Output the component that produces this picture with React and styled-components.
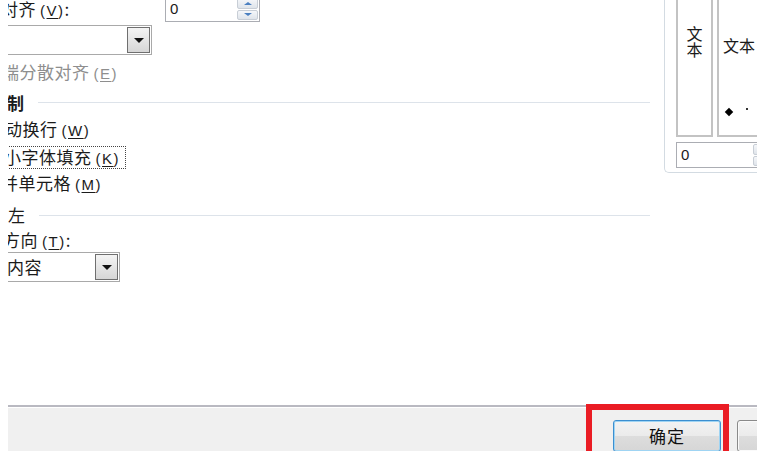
import React from 'react';
import styled, { createGlobalStyle } from 'styled-components';

const Global = createGlobalStyle`
  html, body { margin: 0; padding: 0; background: #fff; overflow: hidden; }
  body { font-family: "Noto Sans CJK SC", "Microsoft YaHei", sans-serif; color: #1b1b1b; }
`;

const Page = styled.div`
  position: relative;
  width: 757px;
  height: 451px;
  display: flex;
  flex-direction: column;
  overflow: hidden;
  background: #fff;
`;

const Main = styled.div`
  height: 405px;
  display: flex;
  flex-shrink: 0;
`;

const LeftPane = styled.div`
  width: 642px;
  margin-left: 8px;
  overflow: hidden;
  display: flex;
  flex-direction: column;
  font-size: 17px;
  letter-spacing: 0.5px;
`;

const Line = styled.div`
  height: 20px;
  line-height: 20px;
  margin-top: ${p => p.$mt || 0}px;
  margin-left: ${p => -(p.$cut || 0)}px;
  white-space: nowrap;
  color: ${p => (p.$disabled ? '#8e8e8e' : '#1b1b1b')};
`;

const Key = styled.span`
  font-family: "Liberation Sans", Arial, sans-serif;
  font-size: 15px;
  letter-spacing: 1.5px;
  margin-left: 4px;
  u { text-decoration: underline; text-underline-offset: 2px; }
`;

const Focus = styled.span`
  display: inline-block;
  border: 1px dotted #444;
  line-height: 19px;
  padding-right: 5px;
`;

const TopRow = styled.div`
  display: grid;
  grid-template-columns: 157px auto;
  align-items: center;
  height: 26px;
  margin-top: -4px;
`;

const Spin = styled.div`
  display: flex;
  width: ${p => p.$w}px;
  height: ${p => p.$h}px;
  border: 1px solid #abadb3;
  box-sizing: border-box;
  background: #fff;
`;

const SpinValue = styled.div`
  flex: 1;
  padding-left: 4px;
  font-size: 15px;
  line-height: ${p => p.$lh}px;
  font-family: "Liberation Sans", Arial, sans-serif;
  letter-spacing: 0;
`;

const SpinBtns = styled.div`
  width: 21px;
  margin: 1px;
  display: flex;
  flex-direction: column;
  gap: 1px;
`;

const SpinHalf = styled.div`
  flex: 1;
  display: flex;
  align-items: center;
  justify-content: center;
  background: linear-gradient(#f5f7fa, #dfe4ea);
  border: 1px solid #c8ced6;
  border-radius: 2px;
  &::after {
    content: '';
    border-left: 4px solid transparent;
    border-right: 4px solid transparent;
    ${p => (p.$up ? 'border-bottom: 3px solid #4a7fc0;' : 'border-top: 3px solid #4a7fc0;')}
  }
`;

const Combo = styled.div`
  display: flex;
  align-items: center;
  width: ${p => p.$w}px;
  height: 30px;
  box-sizing: border-box;
  margin-left: -10px;
  margin-top: ${p => p.$mt || 0}px;
  border: 1px solid #a9a9a9;
  background: #fff;
`;

const ComboText = styled.div`
  flex: 1;
  padding-left: 8px;
  white-space: nowrap;
  line-height: 28px;
`;

const ComboBtn = styled.div`
  width: 23px;
  height: 26px;
  margin-right: 1px;
  box-sizing: border-box;
  border: 1px solid #6f6f6f;
  background: linear-gradient(#f4f4f4, #d6d6d6);
  display: flex;
  align-items: center;
  justify-content: center;
  &::after {
    content: '';
    border-left: 5px solid transparent;
    border-right: 5px solid transparent;
    border-top: 5px solid #111;
  }
`;

const Header = styled.div`
  display: flex;
  align-items: center;
  height: 20px;
  margin-top: ${p => p.$mt}px;
  margin-left: ${p => -(p.$cut || 0)}px;
  font-weight: ${p => (p.$bold ? 700 : 400)};
`;

const HeaderRule = styled.div`
  flex: 1;
  height: 1px;
  margin-left: 13px;
  background: #dde3ea;
  margin-top: ${p => p.$off || 0}px;
`;

const RightPane = styled.div`
  flex: 1;
  margin-left: 14px;
  overflow: hidden;
`;

const GroupBox = styled.div`
  width: 120px;
  height: 173px;
  box-sizing: border-box;
  border-left: 1px solid #d3dbe2;
  border-bottom: 1px solid #d3dbe2;
  border-bottom-left-radius: 5px;
  padding-left: 11px;
  display: grid;
  grid-template-columns: 37px 1fr;
  grid-template-rows: 137px auto;
  column-gap: 4px;
`;

const Panel = styled.div`
  position: relative;
  margin-top: -6px;
  box-sizing: border-box;
  border: 2px solid #c3c3c3;
  border-top: none;
  background: #fff;
`;

const VText = styled.div`
  writing-mode: vertical-rl;
  font-size: 16px;
  letter-spacing: 0;
  margin: 32px auto 0;
  line-height: 16px;
`;

const HText = styled.div`
  font-size: 16px;
  margin: 41px 0 0 4px;
  white-space: nowrap;
  line-height: 20px;
`;

const Diamond = styled.div`
  position: absolute;
  left: 7px;
  top: 115px;
  width: 6px;
  height: 6px;
  background: #000;
  transform: rotate(45deg);
`;

const Dot = styled.div`
  position: absolute;
  left: 27px;
  top: 114px;
  width: 2px;
  height: 2px;
  background: #333;
`;

const SpinRow = styled.div`
  grid-column: 1 / span 2;
  margin-top: 5px;
`;

const Footer = styled.div`
  flex: 1;
  margin-left: 8px;
  background: #f0f0f0;
  border-top: 2px solid #b9b9c1;
  box-shadow: inset 0 1px 0 #fff;
  display: flex;
  align-items: flex-start;
  gap: 16px;
  padding: 13px 0 0 605px;
`;

const Button = styled.div`
  flex-shrink: 0;
  width: ${p => p.$w}px;
  height: 32px;
  box-sizing: border-box;
  border: 1px solid ${p => (p.$primary ? '#3c8fd0' : '#8a8a8a')};
  box-shadow: ${p => (p.$primary ? 'inset 0 0 0 1px #9fd4f3' : 'inset 0 0 0 1px #fafafa')};
  border-radius: 3px;
  background: linear-gradient(#f3f3f3 0%, #ebebeb 50%, #dddddd 51%, #d6d6d6 100%);
  font-size: 17px;
  letter-spacing: 1px;
  text-align: center;
  line-height: 30px;
  color: #111;
`;

const Highlight = styled.div`
  position: absolute;
  left: 586px;
  top: 404px;
  width: 143px;
  height: 56px;
  box-sizing: border-box;
  border: 6px solid #ea1c24;
  pointer-events: none;
`;

export default function App() {
  return (
    <>
      <Global />
      <Page>
        <Main>
          <LeftPane>
            <TopRow>
              <Line $cut={7}>
                对齐<Key>(<u>V</u>)</Key>:
              </Line>
              <Spin $w={95} $h={26}>
                <SpinValue $lh={24}>0</SpinValue>
                <SpinBtns>
                  <SpinHalf $up />
                  <SpinHalf />
                </SpinBtns>
              </Spin>
            </TopRow>
            <Combo $w={154} $mt={3}>
              <ComboText />
              <ComboBtn />
            </Combo>
            <Line $mt={7} $cut={6} $disabled>
              端分散对齐<Key>(<u>E</u>)</Key>
            </Line>
            <Header $mt={10} $cut={1} $bold>
              <span>制</span>
              <HeaderRule />
            </Header>
            <Line $mt={7} $cut={3}>
              动换行<Key>(<u>W</u>)</Key>
            </Line>
            <Line $mt={7} $cut={5}>
              <Focus>
                小字体填充<Key>(<u>K</u>)</Key>
              </Focus>
            </Line>
            <Line $mt={7} $cut={7}>
              并单元格<Key>(<u>M</u>)</Key>
            </Line>
            <Header $mt={11}>
              <span>左</span>
              <HeaderRule $off={2} />
            </Header>
            <Line $mt={6} $cut={5}>
              方向<Key>(<u>T</u>)</Key>:
            </Line>
            <Combo $w={122} $mt={2}>
              <ComboText>内容</ComboText>
              <ComboBtn />
            </Combo>
          </LeftPane>
          <RightPane>
            <GroupBox>
              <Panel>
                <VText>文本</VText>
              </Panel>
              <Panel>
                <HText>文本</HText>
                <Diamond />
                <Dot />
              </Panel>
              <SpinRow>
                <Spin $w={100} $h={26}>
                  <SpinValue $lh={24}>0</SpinValue>
                  <SpinBtns>
                    <SpinHalf $up />
                    <SpinHalf />
                  </SpinBtns>
                </Spin>
              </SpinRow>
            </GroupBox>
          </RightPane>
        </Main>
        <Footer>
          <Button $primary $w={108}>确定</Button>
          <Button $w={80}>取消</Button>
        </Footer>
        <Highlight />
      </Page>
    </>
  );
}
